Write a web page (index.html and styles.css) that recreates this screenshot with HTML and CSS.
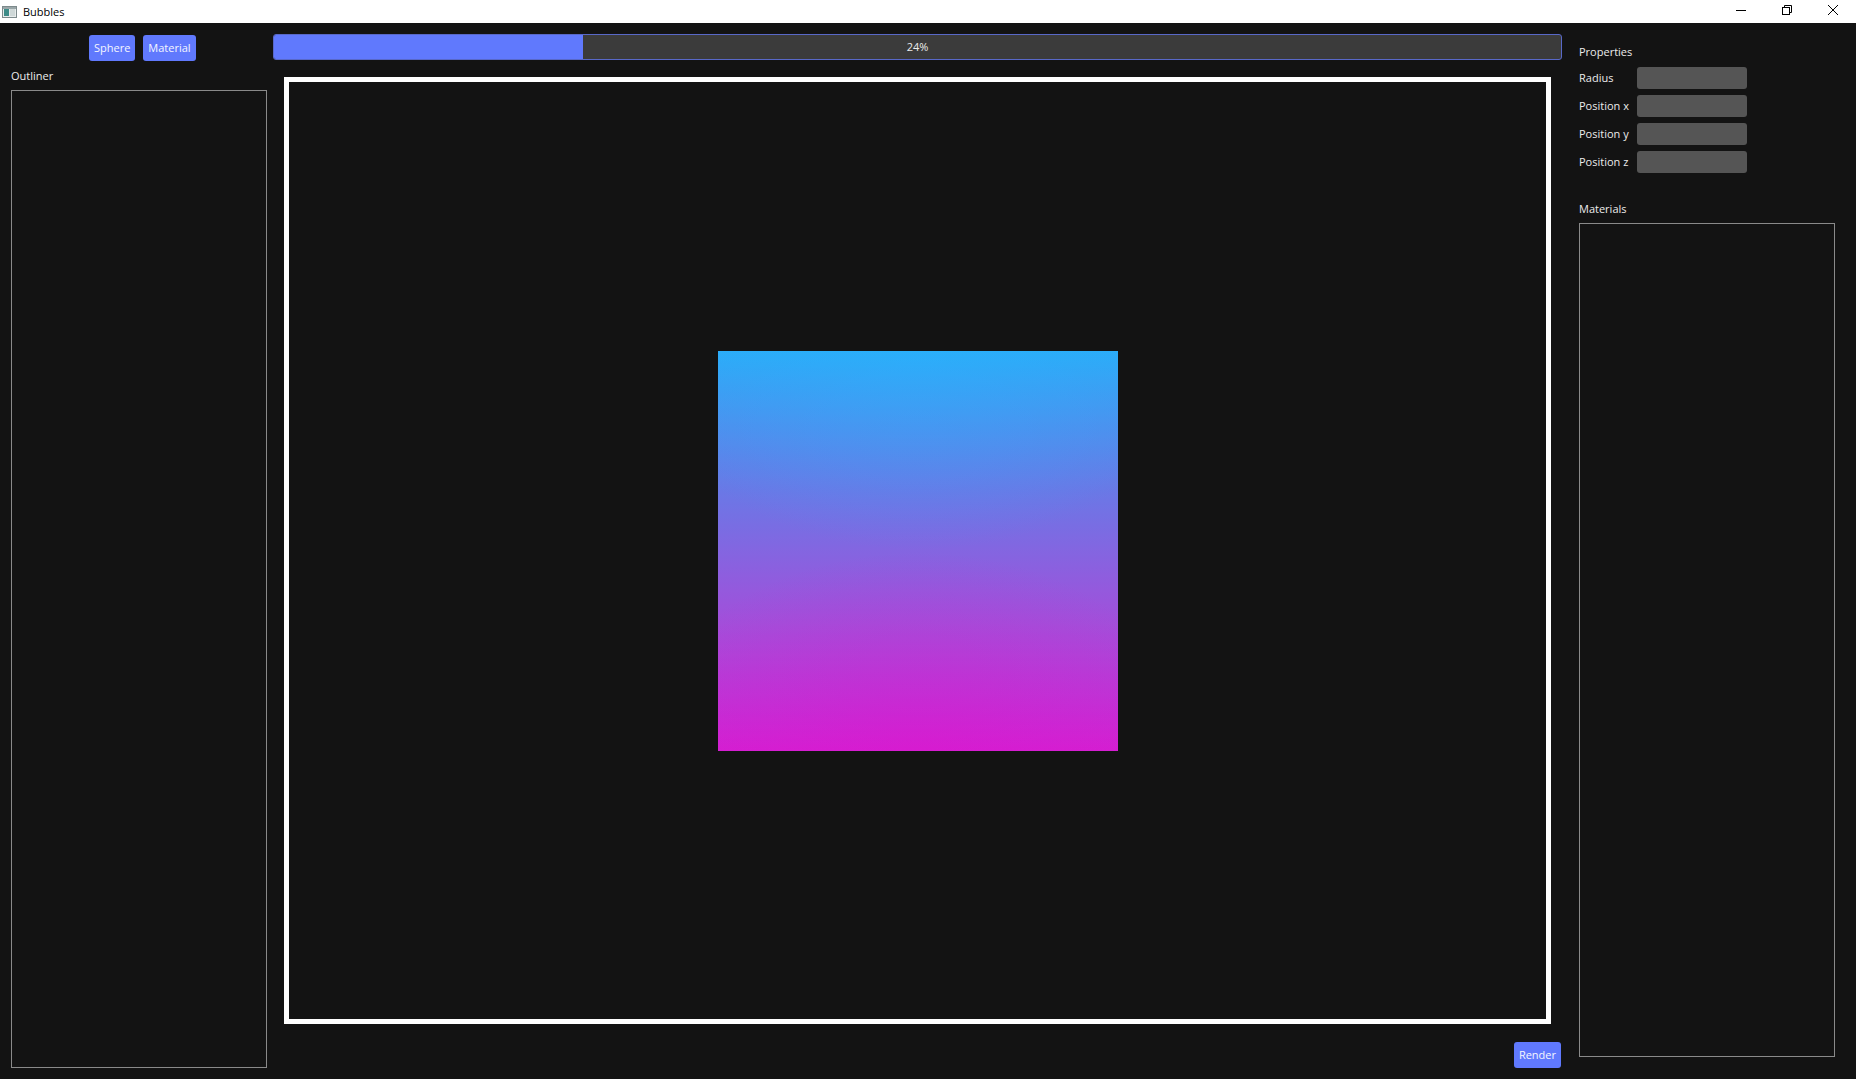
FILE: index.html
```html
<!DOCTYPE html>
<html>
<head>
<meta charset="utf-8">
<title>Bubbles</title>
<link rel="stylesheet" href="styles.css">
</head>
<body>
<div class="window">
  <header class="titlebar">
    <svg class="app-icon" width="15" height="12" viewBox="0 0 15 12">
      <rect x="0.5" y="0.5" width="14" height="11" fill="#e8ecec" stroke="#7d8a8c"/>
      <rect x="1" y="1" width="13" height="2" fill="#9aa6a8"/>
      <rect x="2" y="3" width="5" height="7" fill="#3e8c88"/>
      <rect x="8" y="3" width="5" height="7" fill="#cfd8d8"/>
    </svg>
    <span class="title">Bubbles</span>
    <div class="controls">
      <span class="ctl">
        <svg width="10" height="10" viewBox="0 0 10 10"><path d="M0 5.5H10" stroke="#000" stroke-width="1"/></svg>
      </span>
      <span class="ctl">
        <svg width="10" height="10" viewBox="0 0 10 10" fill="none" stroke="#000" stroke-width="1">
          <rect x="0.5" y="2.5" width="7" height="7"/>
          <path d="M2.5 2.5V0.5H9.5V7.5H7.5"/>
        </svg>
      </span>
      <span class="ctl">
        <svg width="10" height="10" viewBox="0 0 10 10"><path d="M0 0L10 10M10 0L0 10" stroke="#000" stroke-width="1"/></svg>
      </span>
    </div>
  </header>
  <main class="app">
    <aside class="left">
      <div class="toolbar">
        <button class="btn">Sphere</button>
        <button class="btn">Material</button>
      </div>
      <div class="label outliner-label">Outliner</div>
      <div class="list"></div>
    </aside>
    <section class="center">
      <div class="progress">
        <div class="progress-fill" style="width:24%"></div>
        <span class="progress-text">24%</span>
      </div>
      <div class="viewport">
        <div class="render"></div>
      </div>
      <div class="actions">
        <button class="btn">Render</button>
      </div>
    </section>
    <aside class="right">
      <div class="label">Properties</div>
      <div class="props">
        <span class="prop-name">Radius</span><span class="field"></span>
        <span class="prop-name">Position x</span><span class="field"></span>
        <span class="prop-name">Position y</span><span class="field"></span>
        <span class="prop-name">Position z</span><span class="field"></span>
      </div>
      <div class="label materials-label">Materials</div>
      <div class="list"></div>
    </aside>
  </main>
</div>
</body>
</html>
```
FILE: styles.css
```css
* { box-sizing: border-box; }
html, body {
  margin: 0;
  padding: 0;
  width: 1856px;
  height: 1079px;
  overflow: hidden;
  background: #131313;
  font-family: "Open Sans", "Noto Sans", sans-serif;
  font-size: 11px;
  color: #ececec;
}
.window {
  display: flex;
  flex-direction: column;
  height: 1079px;
}
.titlebar {
  height: 23px;
  flex: none;
  background: #ffffff;
  display: flex;
  align-items: center;
  color: #000;
}
.app-icon {
  margin-left: 2px;
  margin-top: 1px;
}
.title {
  margin-left: 6px;
  font-size: 11px;
}
.controls {
  margin-left: auto;
  display: flex;
  height: 23px;
}
.ctl {
  width: 46px;
  height: 23px;
  display: flex;
  align-items: center;
  justify-content: center;
  padding-bottom: 3px;
}
.app {
  flex: 1;
  display: flex;
  min-height: 0;
}
.left {
  width: 273px;
  flex: none;
  display: flex;
  flex-direction: column;
  padding: 12px 6px 11px 11px;
}
.toolbar {
  display: flex;
  gap: 8px;
  padding-left: 78px;
  height: 26px;
}
.btn {
  height: 26px;
  padding: 0 5px;
  border: none;
  border-radius: 3px;
  background: #6079fd;
  color: #f4f6ff;
  font-family: inherit;
  font-size: 11px;
  line-height: 26px;
}
.label {
  line-height: 16px;
  height: 16px;
  color: #ececec;
}
.outliner-label {
  margin-top: 7px;
  margin-bottom: 6px;
}
.list {
  flex: 1;
  border: 1px solid #8a8a8a;
  background: #131313;
}
.center {
  width: 1289px;
  flex: none;
  display: flex;
  flex-direction: column;
  padding-top: 11px;
  padding-bottom: 11px;
}
.progress {
  height: 26px;
  flex: none;
  display: grid;
  border: 1px solid #5868c8;
  border-radius: 3px;
  background: #3b3b3b;
  overflow: hidden;
}
.progress-fill,
.progress-text {
  grid-area: 1 / 1;
}
.progress-fill {
  background: #6079fd;
  height: 100%;
}
.progress-text {
  align-self: center;
  justify-self: center;
  color: #ececec;
  line-height: 16px;
}
.viewport {
  flex: 1;
  margin: 17px 11px 18px;
  border: 5px solid #ffffff;
  display: flex;
  align-items: center;
  justify-content: center;
}
.render {
  width: 400px;
  height: 400px;
  background:
    radial-gradient(ellipse 70% 50% at 50% 0%, rgba(40, 180, 255, 0.35), rgba(40, 180, 255, 0) 100%),
    radial-gradient(ellipse 70% 50% at 50% 100%, rgba(220, 20, 205, 0.35), rgba(220, 20, 205, 0) 100%),
    linear-gradient(to bottom, #2bacf8 0%, #6a78e6 35%, #a24fda 68%, #d41fd2 100%);
}
.actions {
  display: flex;
  justify-content: flex-end;
  padding-right: 1px;
}
.right {
  flex: 1;
  display: flex;
  flex-direction: column;
  padding: 21px 21px 22px 17px;
}
.props {
  margin-top: 7px;
  display: grid;
  grid-template-columns: 58px 110px;
  grid-auto-rows: 22px;
  row-gap: 6px;
  align-items: center;
}
.prop-name {
  line-height: 16px;
  white-space: nowrap;
}
.field {
  height: 22px;
  width: 110px;
  background: #555555;
  border-radius: 3px;
}
.materials-label {
  margin-top: 28px;
  margin-bottom: 6px;
}
```
